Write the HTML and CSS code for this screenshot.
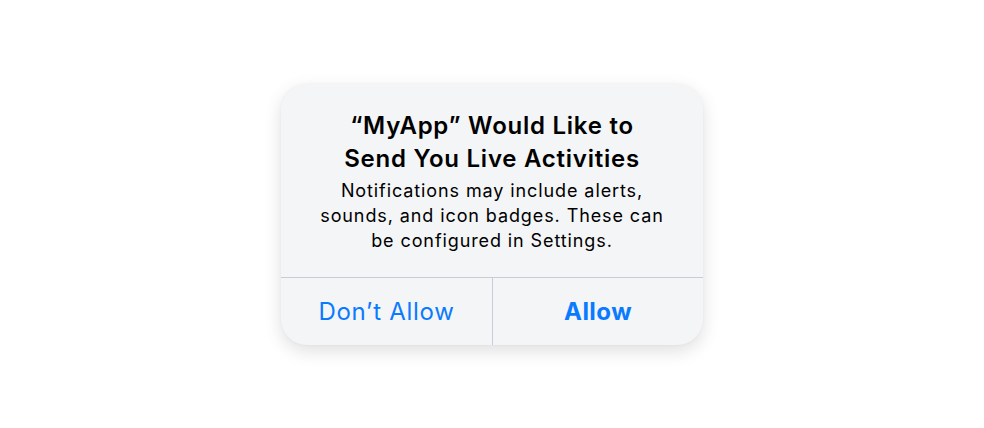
FILE: index.html
```html
<!DOCTYPE html>
<html lang="en">
<head>
<meta charset="utf-8">
<title>Live Activities permission</title>
<link rel="stylesheet" href="styles.css">
</head>
<body>
  <div class="alert">
    <div class="alert-content">
      <h1 class="alert-title">“MyApp” Would Like to<br>Send You Live Activities</h1>
      <p class="alert-message">Notifications may include alerts,<br>sounds, and icon badges. These can<br>be configured in Settings.</p>
    </div>
    <div class="alert-actions">
      <button class="alert-btn">Don’t Allow</button>
      <button class="alert-btn alert-btn-primary">Allow</button>
    </div>
  </div>
</body>
</html>
```

FILE: styles.css
```css
html, body {
  margin: 0;
  padding: 0;
  height: 100%;
}
body {
  background: #ffffff;
  display: flex;
  align-items: center;
  justify-content: center;
  font-family: Inter, "Noto Sans", sans-serif;
  color: #000;
}
.alert {
  width: 422px;
  background: #f4f5f7;
  border-radius: 26px;
  box-shadow: 0 6px 18px rgba(0, 0, 0, 0.13), 0 0 3px rgba(0, 0, 0, 0.04);
  overflow: hidden;
}
.alert-content {
  padding: 25px 10px 24px;
  text-align: center;
}
.alert-title {
  margin: 0;
  font-size: 24px;
  line-height: 33px;
  font-weight: 600;
  letter-spacing: 0.75px;
}
.alert-message {
  margin: 3px 0 0;
  font-size: 18px;
  line-height: 25px;
  font-weight: 400;
  letter-spacing: 0.9px;
}
.alert-actions {
  display: grid;
  grid-template-columns: 1fr 1fr;
  border-top: 1px solid #c8ccd9;
}
.alert-btn {
  appearance: none;
  border: 0;
  background: transparent;
  height: 67px;
  font-family: inherit;
  font-size: 24px;
  font-weight: 400;
  letter-spacing: 0.7px;
  color: #0a7aff;
  padding: 0;
}
.alert-btn + .alert-btn {
  border-left: 1px solid #c8ccd9;
}
.alert-btn-primary {
  font-weight: 700;
  letter-spacing: 0.45px;
}
```
